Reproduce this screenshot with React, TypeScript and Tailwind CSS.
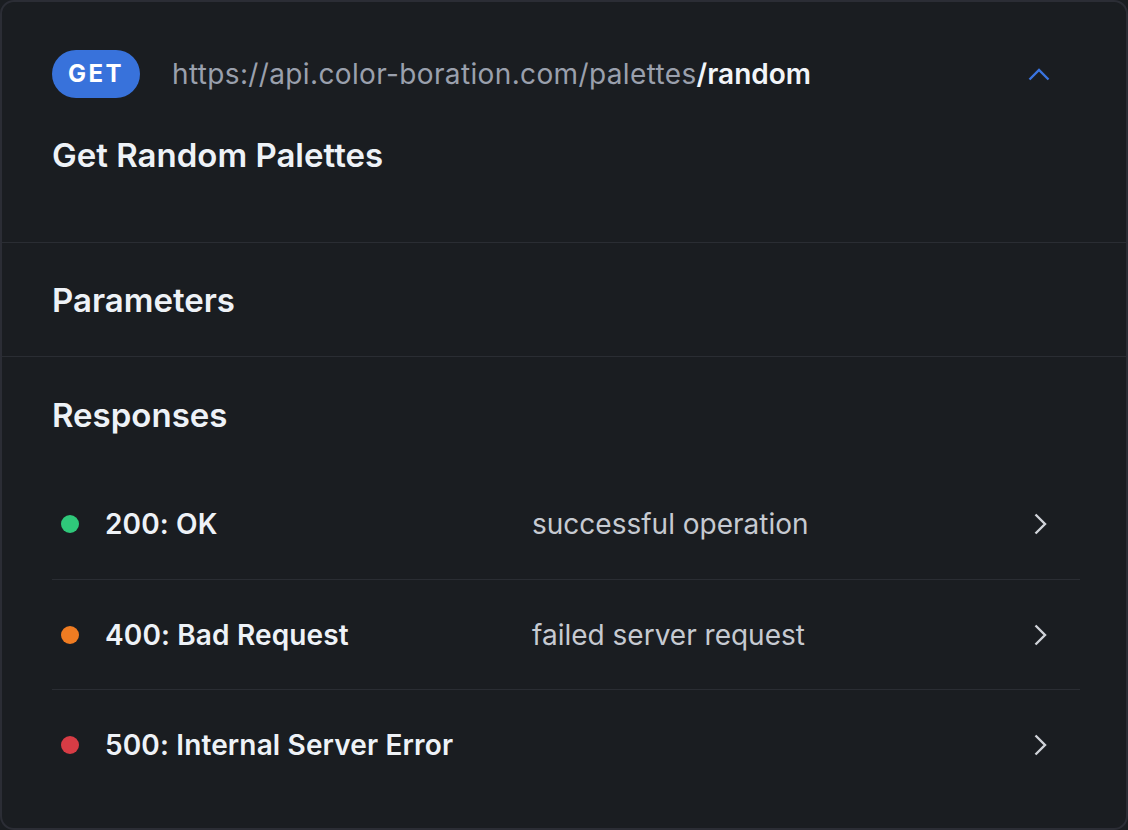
const responses = [
  { code: "200: OK", desc: "successful operation", dot: "bg-[#2fc87a]" },
  { code: "400: Bad Request", desc: "failed server request", dot: "bg-[#f07c22]" },
  { code: "500: Internal Server Error", desc: "", dot: "bg-[#d73c45]" },
];

export default function App() {
  return (
    <div
      className="h-[830px] w-[1128px] bg-[#1a1d21]"
      style={{ fontFamily: "Inter, 'Noto Sans', sans-serif" }}
    >
      <div className="flex h-full flex-col rounded-[14px] border-2 border-[#2b2d35] bg-[#1a1d21]">
        {/* Endpoint header */}
        <div className="border-b border-[#2a2d33] pt-[48px] pb-[67px] pl-[50px] pr-[76px]">
          <div className="flex items-center">
            <span className="flex h-12 w-[88px] items-center justify-center rounded-full bg-[#3872db] text-[24px] font-bold tracking-[0.1em] text-white">
              GET
            </span>
            <span className="ml-8 text-[28px] tracking-[0.013em] text-[#9aa0ad]">
              https://api.color-boration.com/palettes
              <span className="font-semibold tracking-normal text-[#f2f5f9]">/random</span>
            </span>
            <svg
              className="ml-auto"
              width="22"
              height="13"
              viewBox="0 0 22 13"
              fill="none"
              stroke="#3a74e0"
              strokeWidth={2.4}
            >
              <path d="M1.5 11.5 11 2l9.5 9.5" />
            </svg>
          </div>
          <h1 className="mt-[37px] text-[33px] leading-10 font-semibold text-[#eef2f7]">
            Get Random Palettes
          </h1>
        </div>

        {/* Parameters */}
        <div className="flex h-[114px] items-center border-b border-[#2a2d33] px-[50px]">
          <h2 className="text-[33px] leading-10 font-semibold text-[#eef2f7]">Parameters</h2>
        </div>

        {/* Responses */}
        <div className="pt-[38px]">
          <h2 className="px-[50px] text-[33px] leading-10 font-semibold text-[#eef2f7]">
            Responses
          </h2>
          <ul className="mt-[34px] ml-[50px] mr-[46px]">
            {responses.map((r, i) => (
              <li
                key={r.code}
                className={`flex h-[110px] items-center ${
                  i > 0 ? "border-t border-[#2a2d33]" : ""
                }`}
              >
                <span className={`ml-[9px] h-[18px] w-[18px] rounded-full ${r.dot}`} />
                <span className="ml-[26px] w-[427px] text-[28px] font-semibold tracking-[0.005em] text-[#eef2f7]">
                  {r.code}
                </span>
                <span className="text-[28px] text-[#c6cad1]">{r.desc}</span>
                <svg
                  className="ml-auto mr-[33px]"
                  width="13"
                  height="22"
                  viewBox="0 0 13 22"
                  fill="none"
                  stroke="#d0d3d9"
                  strokeWidth={2.4}
                >
                  <path d="M1.5 1.5 11 11l-9.5 9.5" />
                </svg>
              </li>
            ))}
          </ul>
        </div>
      </div>
    </div>
  );
}
